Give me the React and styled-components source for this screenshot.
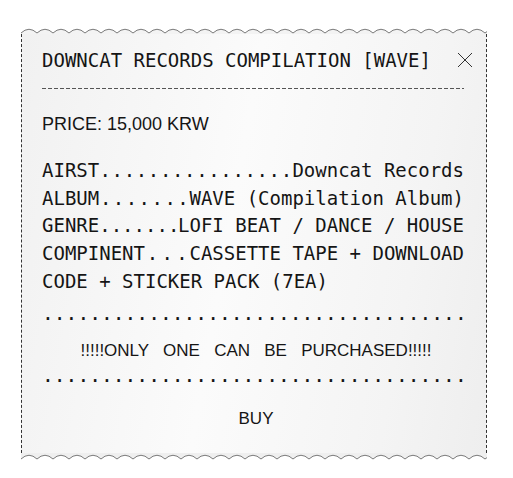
import React from "react";
import styled, { createGlobalStyle } from "styled-components";

const GlobalStyle = createGlobalStyle`
  html, body {
    margin: 0;
    padding: 0;
    background: #ffffff;
  }
`;

const mono = `"DejaVu Sans Mono", "Liberation Mono", monospace`;
const sans = `"Liberation Sans", Arial, sans-serif`;

const Page = styled.div`
  padding: 27px 0 0 21px;
`;

const Receipt = styled.div`
  width: 466px;
  display: flex;
  flex-direction: column;
`;

const Edge = styled.svg`
  display: block;
  width: 466px;
  height: 7px;
`;

const Body = styled.div`
  border-left: 1px dashed #333;
  border-right: 1px dashed #333;
  background: linear-gradient(100deg, #f1f1f1 0%, #fbfbfb 45%, #f4f4f4 80%, #eeeeee 100%);
  padding: 12px 22px 22px 20px;
  color: #151515;
`;

const Header = styled.div`
  display: flex;
  align-items: center;
  justify-content: space-between;
  height: 28px;
`;

const Title = styled.h1`
  margin: 0;
  font-family: ${mono};
  font-weight: normal;
  font-size: 19px;
  line-height: 28px;
`;

const Close = styled.button`
  border: 0;
  background: none;
  padding: 0;
  margin-right: -9px;
  width: 16px;
  height: 16px;
  display: flex;
  cursor: pointer;
`;

const Rule = styled.div`
  margin-top: 14px;
  height: 1px;
  background: repeating-linear-gradient(90deg, #555 0 4px, transparent 4px 6px);
`;

const Price = styled.p`
  margin: 23px 0 0;
  font-family: ${sans};
  font-size: 18px;
  line-height: 24px;
`;

const Spec = styled.div`
  margin-top: 21px;
  font-family: ${mono};
  font-size: 19px;
  line-height: 27.7px;
  white-space: pre;
`;

const SpecRow = styled.div`
  display: flex;
`;

const Leader = styled.span`
  flex: 1;
  display: flex;
  min-width: 0;
`;

const LeaderDot = styled.span`
  flex: 1;
  text-align: center;
`;

const Dots = styled.div`
  margin-top: ${(p) => p.$top}px;
  font-family: ${mono};
  font-size: 19.6px;
  line-height: 28px;
  white-space: pre;
`;

const Footer = styled.div`
  padding-left: 6px;
`;

const Notice = styled.p`
  margin: 11px 0 0;
  text-align: center;
  font-family: ${sans};
  font-size: 17px;
  line-height: 24px;
  word-spacing: 9.5px;
`;

const Buy = styled.button`
  display: block;
  margin: 17px auto 0;
  border: 0;
  background: none;
  padding: 0;
  font-family: ${sans};
  font-size: 17px;
  line-height: 24px;
  color: #151515;
  cursor: pointer;
`;

function Wave({ bottom }) {
  const period = 16;
  const count = Math.ceil(466 / period);
  let d = "M0 6";
  for (let i = 0; i < count; i++) {
    const x = i * period;
    d += ` Q${x + period / 2} -1.5 ${x + period} 6`;
  }
  const fillPath = bottom ? `${d} L466 0 L0 0 Z` : `${d} L466 7 L0 7 Z`;
  return (
    <Edge viewBox="0 0 466 7" preserveAspectRatio="none">
      <path d={fillPath} fill={bottom ? "#efefef" : "#f3f3f3"} stroke="none" />
      <path d={d} fill="none" stroke="#7a7a7a" strokeWidth="1" />
    </Edge>
  );
}

const specs = [
  { label: "AIRST", dots: 16, value: "Downcat Records" },
  { label: "ALBUM", dots: 7, value: "WAVE (Compilation Album)" },
  { label: "GENRE", dots: 7, value: "LOFI BEAT / DANCE / HOUSE" },
  { label: "COMPINENT", dots: 3, value: "CASSETTE TAPE + DOWNLOAD" },
];

const dotLine = ".".repeat(36);

export default function App() {
  return (
    <>
      <GlobalStyle />
      <Page>
        <Receipt>
          <Wave />
          <Body>
            <Header>
              <Title>DOWNCAT RECORDS COMPILATION [WAVE]</Title>
              <Close aria-label="close">
                <svg width="16" height="16" viewBox="0 0 16 16">
                  <path d="M1 1 L15 15 M15 1 L1 15" stroke="#333" strokeWidth="1" fill="none" />
                </svg>
              </Close>
            </Header>
            <Rule />
            <Price>PRICE: 15,000 KRW</Price>
            <Spec>
              {specs.map((s) => (
                <SpecRow key={s.label}>
                  <span>{s.label}</span>
                  <Leader>
                    {Array.from({ length: s.dots }, (_, i) => (
                      <LeaderDot key={i}>.</LeaderDot>
                    ))}
                  </Leader>
                  <span>{s.value}</span>
                </SpecRow>
              ))}
              <SpecRow>CODE + STICKER PACK (7EA)</SpecRow>
            </Spec>
            <Dots $top={4}>{dotLine}</Dots>
            <Footer>
              <Notice>!!!!!ONLY ONE CAN BE PURCHASED!!!!!</Notice>
            </Footer>
            <Dots $top={-1}>{dotLine}</Dots>
            <Footer>
              <Buy>BUY</Buy>
            </Footer>
          </Body>
          <Wave bottom />
        </Receipt>
      </Page>
    </>
  );
}
